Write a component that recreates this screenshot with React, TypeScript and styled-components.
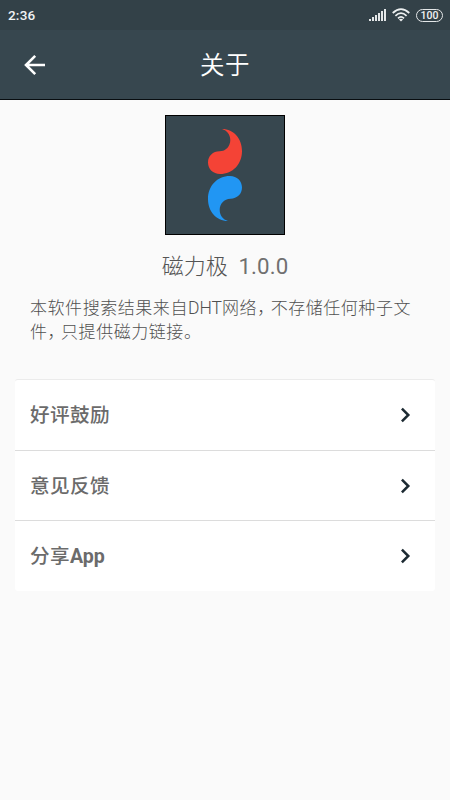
import React from "react";
import styled, { createGlobalStyle } from "styled-components";

const GlobalStyle = createGlobalStyle`
  * { box-sizing: border-box; }
  body {
    margin: 0;
    background: #fafafa;
    font-family: Roboto, "Noto Sans CJK SC", sans-serif;
    color: #6b6b6b;
  }
`;

const Screen = styled.div`
  display: flex;
  flex-direction: column;
  width: 450px;
  height: 800px;
  background: #fafafa;
  overflow: hidden;
`;

const StatusBar = styled.div`
  display: flex;
  align-items: center;
  justify-content: space-between;
  height: 30px;
  padding: 0 7px 0 8px;
  background: #334148;
  color: #f1f3f4;
`;

const Clock = styled.span`
  font-size: 13.5px;
  font-weight: 500;
  letter-spacing: 0.2px;
  line-height: 30px;
`;

const StatusIcons = styled.div`
  display: flex;
  align-items: center;
  gap: 6px;
  svg { display: block; }
`;

const Battery = styled.span`
  display: flex;
  align-items: center;
  justify-content: center;
  width: 27px;
  height: 13px;
  border: 1px solid #e4e7e8;
  border-radius: 7px;
  font-size: 10.5px;
  font-weight: 500;
  line-height: 11px;
`;

const TitleBar = styled.header`
  display: grid;
  grid-template-columns: 70px 1fr 70px;
  align-items: center;
  height: 70px;
  background: #37474f;
  border-bottom: 1px solid #080d10;
`;

const BackButton = styled.button`
  display: flex;
  justify-content: center;
  padding: 0;
  border: 0;
  background: none;
  svg { display: block; }
`;

const Title = styled.h1`
  margin: 0;
  padding-top: 3px;
  text-align: center;
  font-size: 24.5px;
  font-weight: 350;
  line-height: 36px;
  letter-spacing: 0.4px;
  color: #fff;
`;

const About = styled.section`
  display: flex;
  flex-direction: column;
  align-items: center;
  height: 279px;
  padding: 15px 30px 0;
`;

const Logo = styled.div`
  width: 120px;
  height: 120px;
  border: 1px solid #000;
  background: #37474f;
  svg { display: block; margin: -1px; }
`;

const AppName = styled.div`
  margin-top: 14px;
  font-size: 22px;
  font-weight: 300;
  line-height: 34px;
  white-space: pre;
  color: #545454;
`;

const Version = styled.span`
  font-weight: 400;
  font-size: 22.3px;
  letter-spacing: 0.1px;
  color: #707070;
`;

const Description = styled.p`
  width: 390px;
  margin: 13px 0 0;
  font-size: 17px;
  font-weight: 300;
  line-height: 23.5px;
  letter-spacing: 0.55px;
  white-space: nowrap;
  color: #505050;
`;

const Latin = styled.span`
  font-size: 17.5px;
  letter-spacing: 0;
`;

const Comma = styled.span`
  letter-spacing: -3.5px;
`;

const Card = styled.ul`
  margin: 0 15px;
  padding: 0;
  list-style: none;
  background: #fff;
  border-top: 1px solid #ebebeb;
  border-radius: 3px;
`;

const Row = styled.li`
  display: flex;
  align-items: center;
  justify-content: space-between;
  height: 70px;
  padding: 0 23px 0 15px;
  font-size: 19.6px;
  font-weight: 500;
  letter-spacing: 0.4px;
  & + & { border-top: 1px solid #dcdcdc; }
  &:last-child { height: 71px; }
  svg { display: block; }
`;

const Label = styled.span`
  line-height: 28px;
  padding-top: 2px;
`;

const AppWord = styled.span`
  font-weight: 700;
  letter-spacing: 0;
`;

const Signal = () => (
  <svg width="18" height="13" viewBox="0 0 18 13" fill="#e4e7e8">
    <rect x="1" y="10" width="2" height="2" />
    <rect x="4" y="8" width="2" height="4" />
    <rect x="7" y="6" width="2" height="6" />
    <rect x="10" y="4" width="2" height="8" />
    <rect x="13" y="2" width="2" height="10" />
    <rect x="16" y="0" width="2" height="12" />
  </svg>
);

const Wifi = () => (
  <svg width="18" height="14" viewBox="0 0 18 14" fill="none" stroke="#eceff0" strokeWidth="1.7">
    <path d="M.7 5Q9-2.6 17.3 5M3.4 7.8Q9 2.4 14.6 7.8M6 10.4Q9 7.4 12 10.4" />
    <path d="M9 13.6L6.9 11.5Q9 9.8 11.1 11.5Z" fill="#eceff0" stroke="none" />
  </svg>
);

const Chevron = () => (
  <svg width="12" height="16" viewBox="0 0 12 16" fill="none" stroke="#1c2a32" strokeWidth="2.5">
    <path d="M1.9 1.6L8.3 8L1.9 14.4" />
  </svg>
);

const drop = "M57 14C69 14 77 24 77 36C77 49 68 59 55 59C48 59 43 54 43 47.5C43 41 48 36.3 54.5 36.3C61 36.3 65.3 31 65.3 25C65.3 19.5 62 15.5 57 14Z";

const entries = [
  { id: "rate", label: "好评鼓励" },
  { id: "feedback", label: "意见反馈" },
  { id: "share", label: <>分享<AppWord>App</AppWord></> },
];

export default function App() {
  return (
    <Screen>
      <GlobalStyle />
      <StatusBar>
        <Clock>2:36</Clock>
        <StatusIcons>
          <Signal />
          <Wifi />
          <Battery>100</Battery>
        </StatusIcons>
      </StatusBar>
      <TitleBar>
        <BackButton aria-label="返回">
          <svg width="22" height="22" viewBox="0 0 22 22" fill="none" stroke="#fff" strokeWidth="2.6">
            <path d="M21 11H3M11.2 1.8L2 11L11.2 20.2" />
          </svg>
        </BackButton>
        <Title>关于</Title>
      </TitleBar>
      <About>
        <Logo>
          <svg width="120" height="120" viewBox="0 0 120 120">
            <path d={drop} fill="#f44336" />
            <path d={drop} fill="#2196f3" transform="rotate(180 60 60)" />
          </svg>
        </Logo>
        <AppName>磁力极  <Version>1.0.0</Version></AppName>
        <Description>
          本软件搜索结果来自<Latin>DHT</Latin>网络<Comma>，</Comma>不存储任何种子文
          <br />
          件<Comma>，</Comma>只提供磁力链接。
        </Description>
      </About>
      <Card>
        {entries.map((entry) => (
          <Row key={entry.id}>
            <Label>{entry.label}</Label>
            <Chevron />
          </Row>
        ))}
      </Card>
    </Screen>
  );
}
